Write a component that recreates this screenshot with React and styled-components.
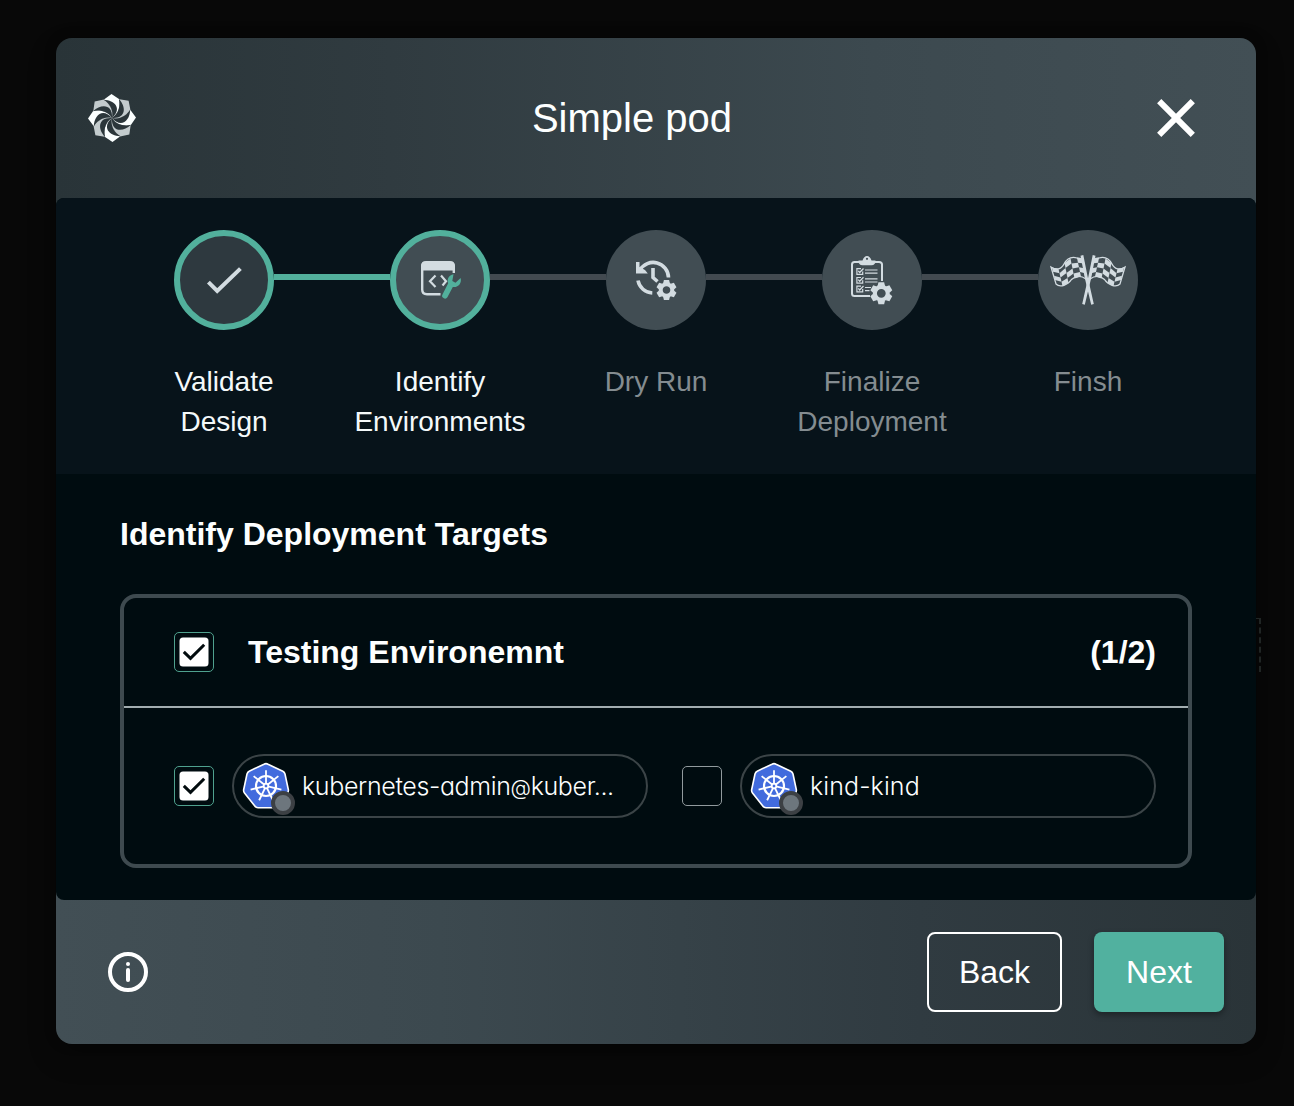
import React from "react";
import styled, { createGlobalStyle, css } from "styled-components";

const TEAL = "#52b09c";
const ICON = "#d3dce1";

const GlobalStyle = createGlobalStyle`
  * { box-sizing: border-box; }
  html, body { margin: 0; height: 100%; background: #080808; }
  #root { height: 100%; }
  body {
    font-family: "Liberation Sans", Arial, Helvetica, sans-serif;
    color: #fdffff;
    overflow: hidden;
  }
`;

const Backdrop = styled.div`
  min-height: 1106px;
  padding: 38px 38px 62px 56px;
  display: grid;
`;

const Dialog = styled.section`
  position: relative;
  width: 1200px;
  height: 1006px;
  display: grid;
  grid-template-rows: 160px 702px 144px;
  border-radius: 16px;
  box-shadow: 0 12px 28px rgba(0, 0, 0, 0.25), 0 0 12px rgba(0, 0, 0, 0.3);
`;

const Header = styled.header`
  display: flex;
  align-items: center;
  justify-content: space-between;
  padding: 0 56px 0 32px;
  margin-bottom: -8px;
  border-radius: 16px 16px 0 0;
  background: linear-gradient(90deg, #293438 0%, #303b40 28%, #3c494f 68%, #424f55 100%);
`;

const Title = styled.h1`
  margin: 0 24px 0 0;
  font-size: 40px;
  line-height: 48px;
  font-weight: 400;
`;

const IconButton = styled.button`
  display: grid;
  place-items: center;
  padding: 0;
  border: 0;
  background: none;
  color: #fff;
`;

const HeaderItem = styled.div`
  display: flex;
  align-items: center;
  height: 160px;
  align-self: flex-start;
`;

const Main = styled.main`
  position: relative;
  display: grid;
  grid-template-rows: 276px 1fr;
  border-radius: 8px;
  overflow: hidden;
  background: #000c10;
`;

const Stepper = styled.ol`
  margin: 0;
  padding: 32px 60px 0;
  list-style: none;
  display: grid;
  grid-template-columns: repeat(5, 216px);
  background: #07131a;
`;

const Step = styled.li`
  display: grid;
  grid-template-rows: 100px auto;
  row-gap: 32px;
`;

const StepTrack = styled.div`
  display: grid;
  grid-template-columns: 1fr 100px 1fr;
`;

const Connector = styled.span`
  height: 6px;
  margin-top: 44px;
  background: ${({ $state }) =>
    $state === "done" ? TEAL : $state === "pending" ? "#424a50" : "transparent"};
`;

const StepCircle = styled.span`
  display: grid;
  place-items: center;
  width: 100px;
  height: 100px;
  border-radius: 50%;
  background: ${({ $done }) => ($done ? "#2e393f" : "#414d53")};
  ${({ $active }) =>
    $active &&
    css`
      border: 6px solid ${TEAL};
    `}
`;

const StepLabel = styled.span`
  text-align: center;
  white-space: pre-line;
  font-size: 28px;
  line-height: 40px;
  color: ${({ $active }) => ($active ? "#f4f9fa" : "#848c90")};
`;

const Content = styled.div`
  padding: 40px 64px 32px;
  display: flex;
  flex-direction: column;
`;

const SectionTitle = styled.h2`
  margin: 0 0 40px;
  font-size: 32px;
  line-height: 40px;
  font-weight: 700;
`;

const Environment = styled.section`
  height: 274px;
  border: 4px solid #3e4a4f;
  border-radius: 16px;
`;

const EnvironmentHeader = styled.div`
  height: 110px;
  display: flex;
  align-items: center;
  padding: 0 32px 0 50px;
  border-bottom: 2px solid #a2adb0;
  font-size: 32px;
  font-weight: 700;
`;

const EnvironmentName = styled.span`
  flex: 1;
  margin-left: 34px;
`;

const Connections = styled.div`
  display: grid;
  grid-template-columns: 474px 474px;
  column-gap: 34px;
  padding: 46px 32px 0 50px;
`;

const Connection = styled.label`
  display: grid;
  grid-template-columns: 40px 416px;
  column-gap: 18px;
  align-items: center;
`;

const CheckFrame = styled.span`
  display: grid;
  place-items: center;
  width: 40px;
  height: 40px;
  border: 1.5px solid ${({ $checked }) => ($checked ? "#4fa18e" : "#919a9d")};
  border-radius: 5px;
`;

const Chip = styled.span`
  display: flex;
  align-items: center;
  height: 64px;
  padding-left: 8px;
  border: 2px solid #3b4447;
  border-radius: 32px;
`;

const ClusterIcon = styled.span`
  position: relative;
  width: 48px;
  height: 48px;
  margin-right: 12px;
`;

const StatusDot = styled.span`
  position: absolute;
  left: 29px;
  top: 29px;
  width: 24px;
  height: 24px;
  border: 4px solid #3c4044;
  border-radius: 50%;
  background: #6d767d;
`;

const ClusterName = styled.span`
  font-family: Inter, "Noto Sans", sans-serif;
  font-feature-settings: "cv11";
  font-size: 25px;
  font-weight: 300;
  line-height: 36px;
  letter-spacing: ${({ $spacing }) => $spacing}px;
`;

const AtSign = styled.span`
  font-size: 21px;
  line-height: 0;
`;

const Footer = styled.footer`
  display: flex;
  align-items: center;
  margin-top: -8px;
  padding: 8px 32px 0 48px;
  border-radius: 0 0 16px 16px;
  background: linear-gradient(90deg, #424f55 0%, #3c494f 32%, #303b41 72%, #2a3438 100%);
`;

const FooterActions = styled.div`
  display: flex;
  gap: 32px;
  margin-left: auto;
`;

const Button = styled.button`
  width: ${({ $primary }) => ($primary ? 130 : 135)}px;
  height: 80px;
  padding: 0;
  border: ${({ $primary }) => ($primary ? "0" : "2px solid #fff")};
  border-radius: 8px;
  background: ${({ $primary }) => ($primary ? "#51b19f" : "transparent")};
  box-shadow: ${({ $primary }) => ($primary ? "0 3px 6px rgba(0,0,0,.35)" : "none")};
  color: #fff;
  font: 400 32px/40px "Liberation Sans", Arial, sans-serif;
`;

const CanvasEdge = styled.span`
  position: absolute;
  left: 1200px;
  top: 580px;
  width: 5px;
  height: 54px;
  border: 2px dashed #202524;
  border-width: 1px 2px 0 0;
`;

function Logo() {
  return (
    <svg width="48" height="48" viewBox="-24 -24 48 48">
      {Array.from({ length: 8 }, (_, i) => (
        <path
          key={i}
          transform={`rotate(${i * 45})`}
          d="M0 0C2 -8 -3 -15 -8 -18.400L-.5 -24 7.350 -18.700C8.500 -12.700 7.100 -4.200 0 0Z"
          fill={i % 2 ? "#c3cbcd" : "#fbffff"}
        />
      ))}
      {Array.from({ length: 8 }, (_, i) => (
        <path
          key={`gap${i}`}
          transform={`rotate(${i * 45})`}
          d="M0 0C2 -8 -3 -15 -8.500 -18.200C3 -18 10.500 -9 0 0Z"
          fill="#2b363a"
        />
      ))}
    </svg>
  );
}

function CloseIcon() {
  return (
    <svg width="48" height="48" viewBox="0 0 48 48" stroke="#fff" strokeWidth="6">
      <path d="M7.2 7.2 40.8 40.8M40.8 7.2 7.2 40.8" />
    </svg>
  );
}

function StepCheckIcon() {
  return (
    <svg width="48" height="48" viewBox="0 0 48 48" fill="none" stroke={ICON} strokeWidth="4">
      <path d="M8.400 26.200 17.200 35 40.400 12.600" />
    </svg>
  );
}

function EnvironmentIcon() {
  return (
    <svg width="56" height="56" viewBox="0 0 56 56">
      <path
        d="M41.800 21V15Q41.800 11 38 11H14Q10.200 11 10.200 15V37.500Q10.200 42.200 15 42.200H28.500"
        fill="none" stroke={ICON} strokeWidth="2.400"
      />
      <path d="M9 18.500V14Q9 9 14 9H38Q43 9 43 14V18.500Z" fill={ICON} />
      <path
        d="M23.500 23.500 18 29.200 23.500 34.900M29 23.500 34 29.200 30.500 33.500"
        fill="none" stroke={ICON} strokeWidth="2.200"
      />
      <path
        d="M41.500 22.200C36.600 23 34.600 27.700 36.200 31.200L30.600 42.200A2.700 2.700 0 1 0 35.400 45.200L40.800 34.900C45.500 36.100 50.200 31.500 48.600 26L43.500 30.700 40.300 28.900Z"
        fill={TEAL}
      />
    </svg>
  );
}

function Gear({ x, y, r, inner }) {
  const tooth = r * 0.26;
  return (
    <g transform={`translate(${x} ${y})`}>
      <circle r={(r * 0.77 + inner) / 2} fill="none" stroke={ICON} strokeWidth={r * 0.77 - inner} />
      {Array.from({ length: 6 }, (_, i) => (
        <path
          key={i}
          transform={`rotate(${i * 60})`}
          d={`M${-tooth * 1.3} ${-r * 0.67}L${-tooth} ${-r}H${tooth}L${tooth * 1.3} ${-r * 0.67}Z`}
          fill={ICON}
        />
      ))}
    </g>
  );
}

function DryRunIcon() {
  return (
    <svg width="56" height="56" viewBox="0 0 56 56">
      <g fill="none" stroke={ICON} strokeWidth="3.600">
        <path d="M12 18A15.300 15.300 0 0 1 40.500 25.500M10 28.500A15.300 15.300 0 0 0 24.300 41" />
        <path d="M25 16V25.500L29.500 29.500" />
      </g>
      <path d="M8 10H11.500V15L17 18 19.800 21.500H8Z" fill={ICON} />
      <Gear x={38.500} y={38} r={10} inner={3.800} />
    </svg>
  );
}

function FinalizeIcon() {
  return (
    <svg width="60" height="60" viewBox="0 0 60 60">
      <path
        d="M28 46H12.500Q10 46 10 43.500V14.500Q10 12 12.500 12H37Q40 12 40 14.500V31"
        fill="none" stroke={ICON} strokeWidth="2"
      />
      <path d="M16.500 10.500H20.500Q22 6 25 6T29.500 10.500H33.500Q33.500 15.300 29.500 15.300H20.500Q16.500 15.300 16.500 10.500Z" fill={ICON} />
      <circle cx="25" cy="8.800" r="1.100" fill="#414d53" />
      {[21.500, 30.300, 39].map((y) => (
        <g key={y} fill="none" stroke={ICON}>
          <path strokeWidth="1.200" d={`M19 ${y - 2.800}H14.900V${y + 2.900}H20.700V${y}`} />
          <path strokeWidth="1.300" d={`M16.300 ${y - 0.700} 17.700 ${y + 1} 21.500 ${y - 3}`} />
          <path strokeWidth="1.200" d={y < 35 ? `M23 ${y - 1.500}H35.500M23 ${y + 1.700}H35.500` : `M23 ${y - 1.500}H29M23 ${y + 1.700}H27.500`} />
        </g>
      ))}
      <Gear x={39.300} y={43.300} r={11} inner={4.400} />
    </svg>
  );
}

const flagColumns = [
  [2, 17.500, 34], [8.500, 19, 36], [14.500, 13, 33],
  [20.500, 8.500, 28.500], [27, 8, 26.500], [33, 8.500, 28.500],
];

function Flag() {
  return (
    <g>
      {flagColumns.slice(0, 5).map(([x, top, bottom], col) => {
        const [nextX, nextTop, nextBottom] = flagColumns[col + 1];
        return [0, 1, 2, 3].map((row) => {
          if ((row + col) % 2) return null;
          const a = top + ((bottom - top) * row) / 4;
          const b = top + ((bottom - top) * (row + 1)) / 4;
          const c = nextTop + ((nextBottom - nextTop) * (row + 1)) / 4;
          const d = nextTop + ((nextBottom - nextTop) * row) / 4;
          const lean = row;
          return (
            <path
              key={`${col}-${row}`}
              d={`M${x + lean} ${a}L${x + lean + 1} ${b}L${nextX + lean + 1} ${c}L${nextX + lean} ${d}Z`}
              fill={ICON}
            />
          );
        });
      })}
      <path
        d="M1 17C6 20 11 20 14 14 17 8.500 22 6.500 27 8L33 9 36 29C31 25.500 26 25.500 21.500 29.500 18 35 10 38 6 34Z"
        fill="none" stroke={ICON} strokeWidth="1.300"
      />
      <path d="M30.500 5.700 33.300 5 37.500 26 43.800 54 41.200 54.700 34.800 28Z" fill={ICON} />
    </g>
  );
}

function FinishIcon() {
  return (
    <svg width="76" height="60" viewBox="0 0 76 60">
      <Flag />
      <g transform="translate(76 0) scale(-1 1)">
        <Flag />
      </g>
    </svg>
  );
}

function Checkbox({ checked }) {
  return (
    <CheckFrame $checked={checked}>
      {checked && (
        <svg width="30" height="30" viewBox="0 0 30 30">
          <rect x="0.500" y="0.500" width="29" height="29" rx="3.500" fill="#fff" />
          <path d="M4.800 14.800 11.500 21.300 25.200 7.800" fill="none" stroke="#020b0e" strokeWidth="3" />
        </svg>
      )}
    </CheckFrame>
  );
}

function KubernetesIcon() {
  return (
    <svg width="48" height="48" viewBox="-24 -24 48 48">
      <path
        d="M-2 -21.800Q0 -23 2 -21.800L16.800 -14.800Q18.500 -14 19 -12L22.300 3.500Q22.700 5.500 21.500 7L11.200 20Q10 21.700 8 21.700H-8Q-10 21.700 -11.200 20L-21.500 7Q-22.700 5.500 -22.300 3.500L-19 -12Q-18.500 -14 -16.800 -14.800Z"
        fill="#426bdd" stroke="#fff" strokeWidth="1.600"
      />
      <g fill="none" stroke="#fff">
        <circle r="10" strokeWidth="2.200" />
        {Array.from({ length: 7 }, (_, i) => (
          <path key={i} transform={`rotate(${(i * 360) / 7})`} d="M0 -2V-15.800" strokeWidth="1.800" />
        ))}
        <circle r="2.300" strokeWidth="1.800" />
      </g>
    </svg>
  );
}

function InfoIcon() {
  return (
    <svg width="48" height="48" viewBox="0 0 48 48">
      <circle cx="24" cy="24" r="18" fill="none" stroke="#fff" strokeWidth="4" />
      <circle cx="24" cy="16" r="2" fill="#fff" />
      <path d="M24 22V32" stroke="#fff" strokeWidth="4" strokeLinecap="round" />
    </svg>
  );
}

const steps = [
  { label: "Validate\nDesign", icon: StepCheckIcon, done: true, active: true, before: "none", after: "done" },
  { label: "Identify\nEnvironments", icon: EnvironmentIcon, active: true, before: "done", after: "pending" },
  { label: "Dry Run", icon: DryRunIcon, before: "pending", after: "pending" },
  { label: "Finalize\nDeployment", icon: FinalizeIcon, before: "pending", after: "pending" },
  { label: "Finsh", icon: FinishIcon, before: "pending", after: "none" },
];

const connections = [
  { user: "kubernetes-admin", name: "kuber...", checked: true, spacing: -0.36 },
  { name: "kind-kind", checked: false, spacing: 0.1 },
];

export default function App() {
  return (
    <Backdrop>
      <GlobalStyle />
      <Dialog role="dialog" aria-labelledby="dialog-title">
        <Header>
          <HeaderItem><Logo /></HeaderItem>
          <HeaderItem><Title id="dialog-title">Simple pod</Title></HeaderItem>
          <HeaderItem><IconButton aria-label="Close"><CloseIcon /></IconButton></HeaderItem>
        </Header>
        <Main>
          <Stepper>
            {steps.map(({ label, icon: Icon, done, active, before, after }) => (
              <Step key={label}>
                <StepTrack>
                  <Connector $state={before} />
                  <StepCircle $done={done} $active={active}><Icon /></StepCircle>
                  <Connector $state={after} />
                </StepTrack>
                <StepLabel $active={active}>{label}</StepLabel>
              </Step>
            ))}
          </Stepper>
          <Content>
            <SectionTitle>Identify Deployment Targets</SectionTitle>
            <Environment>
              <EnvironmentHeader>
                <Checkbox checked />
                <EnvironmentName>Testing Environemnt</EnvironmentName>
                <span>(1/2)</span>
              </EnvironmentHeader>
              <Connections>
                {connections.map(({ user, name, checked, spacing }) => (
                  <Connection key={name}>
                    <Checkbox checked={checked} />
                    <Chip>
                      <ClusterIcon><KubernetesIcon /><StatusDot /></ClusterIcon>
                      <ClusterName $spacing={spacing}>
                        {user}{user && <AtSign>@</AtSign>}{name}
                      </ClusterName>
                    </Chip>
                  </Connection>
                ))}
              </Connections>
            </Environment>
          </Content>
        </Main>
        <Footer>
          <IconButton aria-label="Information"><InfoIcon /></IconButton>
          <FooterActions>
            <Button>Back</Button>
            <Button $primary>Next</Button>
          </FooterActions>
        </Footer>
        <CanvasEdge />
      </Dialog>
    </Backdrop>
  );
}
